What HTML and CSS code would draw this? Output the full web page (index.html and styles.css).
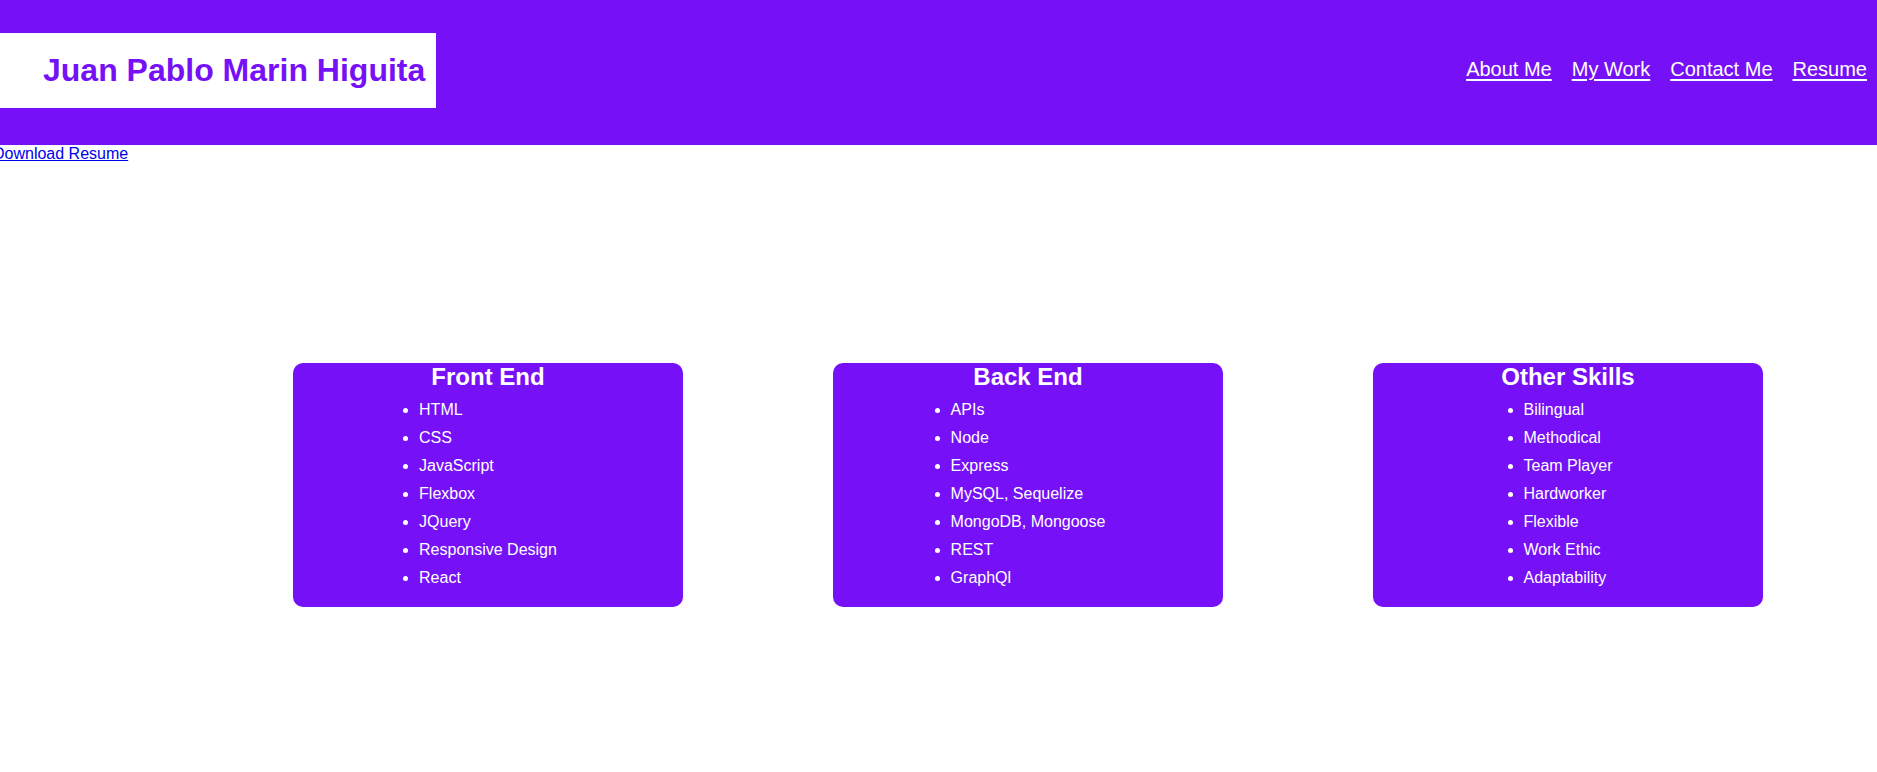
FILE: index.html
```html
<!DOCTYPE html>
<html lang="en">
<head>
<meta charset="utf-8">
<title>Juan Pablo Marin Higuita</title>
<link rel="stylesheet" href="styles.css">
</head>
<body>
<header class="site-header">
  <h1 class="brand">Juan Pablo Marin Higuita</h1>
  <nav class="nav">
    <a href="#about">About Me</a>
    <a href="#work">My Work</a>
    <a href="#contact">Contact Me</a>
    <a href="#resume">Resume</a>
  </nav>
</header>
<a class="download" href="#resume">Download Resume</a>
<section class="skills">
  <div class="card">
    <h2>Front End</h2>
    <ul>
      <li>HTML</li>
      <li>CSS</li>
      <li>JavaScript</li>
      <li>Flexbox</li>
      <li>JQuery</li>
      <li>Responsive Design</li>
      <li>React</li>
    </ul>
  </div>
  <div class="card">
    <h2>Back End</h2>
    <ul>
      <li>APIs</li>
      <li>Node</li>
      <li>Express</li>
      <li>MySQL, Sequelize</li>
      <li>MongoDB, Mongoose</li>
      <li>REST</li>
      <li>GraphQl</li>
    </ul>
  </div>
  <div class="card">
    <h2>Other Skills</h2>
    <ul>
      <li>Bilingual</li>
      <li>Methodical</li>
      <li>Team Player</li>
      <li>Hardworker</li>
      <li>Flexible</li>
      <li>Work Ethic</li>
      <li>Adaptability</li>
    </ul>
  </div>
</section>
</body>
</html>
```
FILE: styles.css
```css
html, body {
  margin: 0;
  padding: 0;
  background: #ffffff;
  font-family: "Liberation Sans", Arial, sans-serif;
  font-size: 16px;
}

.site-header {
  height: 145px;
  background: #7611f7;
  display: flex;
  align-items: center;
  justify-content: space-between;
}

.brand {
  margin: 0;
  background: #ffffff;
  color: #7611f7;
  font-size: 32px;
  font-weight: bold;
  padding: 19px 11px 19px 43px;
  line-height: 37px;
  margin-bottom: 4px;
}

.nav {
  display: flex;
  margin-bottom: 6px;
}

.nav a {
  color: #ffffff;
  font-size: 20px;
  margin: 0 10px;
  text-decoration: underline;
  text-underline-offset: 3px;
}

.download {
  display: block;
  width: max-content;
  margin-left: -7px;
  color: #0000ee;
  text-decoration: underline;
  line-height: 18px;
}

.skills {
  display: flex;
  gap: 150px;
  padding-left: 293px;
  margin-top: 200px;
}

.card {
  width: 390px;
  height: 244px;
  box-sizing: border-box;
  background: #7611f7;
  border-radius: 10px;
  color: #ffffff;
  display: flex;
  flex-direction: column;
  align-items: center;
}

.card h2 {
  margin: 0;
  font-size: 24px;
  font-weight: bold;
}

.card ul {
  margin: 5px 0 0;
  padding: 0;
}

.card li {
  line-height: 28px;
  font-size: 16px;
}
```
